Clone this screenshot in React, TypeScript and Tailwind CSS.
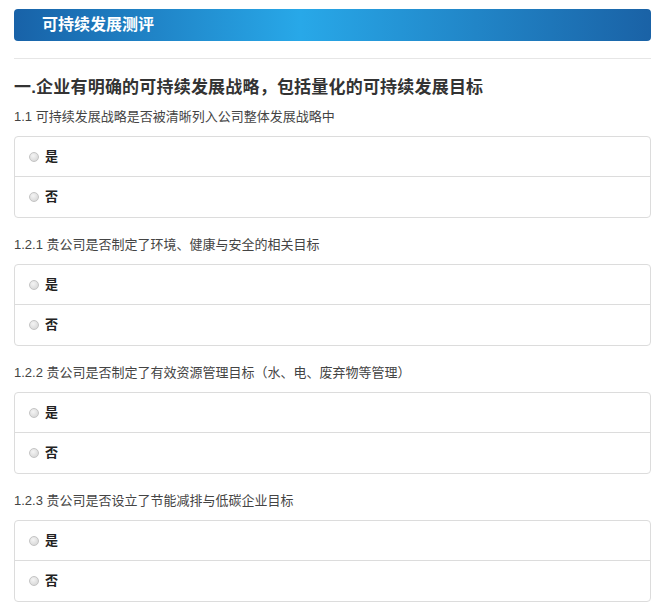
import React from 'react';

const questions = [
  '1.1 可持续发展战略是否被清晰列入公司整体发展战略中',
  '1.2.1 贵公司是否制定了环境、健康与安全的相关目标',
  '1.2.2 贵公司是否制定了有效资源管理目标（水、电、废弃物等管理）',
  '1.2.3 贵公司是否设立了节能减排与低碳企业目标',
];

function Radio() {
  return (
    <span className="inline-block w-[10px] h-[10px] rounded-full border border-[#c4c4c4] bg-[radial-gradient(circle_at_40%_35%,#f4f4f4,#d2d2d2)] shrink-0" />
  );
}

function Options() {
  return (
    <div className="border border-[#dcdcdc] rounded-[4px] bg-white">
      {['是', '否'].map((label, i) => (
        <label
          key={label}
          className={`flex items-center h-[40px] pl-[14px] gap-[6px] ${i === 0 ? 'border-b border-[#dcdcdc]' : ''}`}
        >
          <Radio />
          <span className="text-[13px] font-bold text-[#222]">{label}</span>
        </label>
      ))}
    </div>
  );
}

export default function App() {
  return (
    <div
      className="bg-white min-h-[616px] pt-[9px] pl-[14px] pr-[20px]"
      style={{ fontFamily: '"Liberation Sans", "Noto Sans CJK SC", sans-serif' }}
    >
      {/* Title bar */}
      <div className="h-[32px] rounded-[4px] flex items-center pl-[28px] bg-[linear-gradient(to_right,#1862a8,#28a8e8_45%,#1a62a6)]">
        <span className="text-white text-[16px] font-bold">可持续发展测评</span>
      </div>
      <div className="h-[18px] border-b border-[#e6e6e6]" />

      <h2 className="mt-[17px] text-[17px] leading-[24px] font-bold text-[#333] tracking-[0.2px]">
        一.企业有明确的可持续发展战略，包括量化的可持续发展目标
      </h2>

      <div className="mt-[7px] flex flex-col gap-[17px]">
        {questions.map((q) => (
          <div key={q}>
            <p className="text-[13px] leading-[20px] text-[#444] mb-[9px]">{q}</p>
            <Options />
          </div>
        ))}
      </div>
    </div>
  );
}
